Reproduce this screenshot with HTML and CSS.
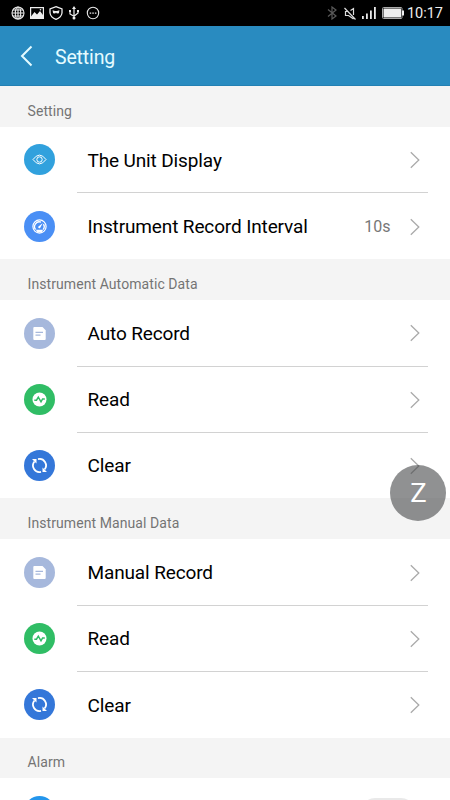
FILE: index.html
```html
<!DOCTYPE html>
<html lang="en">
<head>
<meta charset="utf-8">
<title>Setting</title>
<link rel="stylesheet" href="styles.css">
</head>
<body>
<svg class="defs" aria-hidden="true">
  <symbol id="next" viewBox="0 0 10 18"><path d="M.8 1.2 8.8 9l-8 7.8" fill="none" stroke="currentColor" stroke-width="1.3"/></symbol>
  <symbol id="eye" viewBox="0 0 31 31"><g fill="none" stroke="#fff"><path d="M9 15.5Q15.5 6.7 22 15.5 15.5 24.3 9 15.5Z"/><circle cx="15.5" cy="15.5" r="2.7"/></g></symbol>
  <symbol id="gauge" viewBox="0 0 31 31"><circle cx="15.5" cy="15.5" r="6.6" fill="none" stroke="#fff" stroke-width="1.2"/><path d="M11.6 18.5a4.7 4.7 0 0 1 5.4-7.3M19.5 13.2a4.7 4.7 0 0 1-.2 5.3" fill="none" stroke="#fff" stroke-width="1.3"/><path d="m14.2 15.7 4.6-3.6-2.7 5a1.3 1.3 0 0 1-1.9-1.4ZM11.8 18.7h7.4l-1.700 2.800h-4Z" fill="#fff"/></symbol>
  <symbol id="doc" viewBox="0 0 31 31"><path d="M10.300 9h8.200l3.200 3.200v8.800q0 1-1 1H10.300q-1 0-1-1v-11q0-1 1-1Z" fill="#fff"/><path d="M11.500 14.300h7.500M11.500 17.200h5" stroke="#a6b8dc" stroke-width="1.200"/></symbol>
  <symbol id="pulse" viewBox="0 0 31 31"><circle cx="15.500" cy="15.500" r="7" fill="#fff"/><path d="M10.300 16.200h2.200l1.800-3 2.700 4.600 1.600-2.900h2.200" fill="none" stroke="#30bd65" stroke-width="1.500"/></symbol>
  <symbol id="sync" viewBox="0 0 31 31"><g fill="none" stroke="#fff" stroke-width="1.800"><path d="M14 9.200a6.400 6.400 0 0 1 6.500 10.300M17 21.800a6.400 6.400 0 0 1-6.500-10.300"/></g><path d="M18.500 17.500v4.500h4.500ZM12.500 13.500V9H8Z" fill="#fff"/></symbol>
</svg>
<div class="screen">
  <div class="status">
    <div class="group">
      <svg width="14" height="14" viewBox="0 0 14 14" fill="none" stroke="#e8e8e8" stroke-width="1.1"><circle cx="7" cy="7" r="6"/><ellipse cx="7" cy="7" rx="2.7" ry="6"/><path d="M7 1v12M1 7h12M2 4h10M2 10h10"/></svg>
      <svg width="14" height="12" viewBox="0 0 14 12"><path d="M.6.6h12.800v10.800H.6Z" fill="none" stroke="#eee" stroke-width="1.200"/><path d="M1 9.500 4.500 5 7 7.500 10 4l3 4v3.400H1Z" fill="#eee"/><circle cx="10.500" cy="2.700" r=".8" fill="#eee"/></svg>
      <svg width="14" height="14" viewBox="0 0 14 14"><path d="M7 .7 13 3v4q-.7 4.500-6 6.300Q1.700 11.500 1 7V3Z" fill="none" stroke="#eee" stroke-width="1.300"/><path d="m3.600 4.200 2.400.8h2l2.400-.8-.5 3-2 .3L7 6.500l-.9 1-2-.3Z" fill="#eee"/></svg>
      <svg width="12" height="14" viewBox="0 0 12 14"><path d="M6 2v9M2 5v3l4 2.300L10 7V5" fill="none" stroke="#eee" stroke-width="1.200"/><path d="m6 0 2 3H4ZM1 4h2v2H1ZM9 4h2v2H9Z" fill="#eee"/><circle cx="6" cy="12" r="1.500" fill="#eee"/></svg>
      <svg class="more" width="14" height="14" viewBox="0 0 14 14"><circle cx="7" cy="7" r="5.700" fill="none" stroke="#e8e8e8" stroke-width="1.100"/><path d="M3.700 6.500h1.500v1.300H3.700ZM6.300 6.500h1.500v1.300H6.300ZM8.900 6.500h1.500v1.300H8.900Z" fill="#eee"/></svg>
    </div>
    <div class="group right">
      <svg width="10" height="14" viewBox="0 0 10 14" fill="none" stroke="#5a5a5a" stroke-width="1.200"><path d="m1 3.500 8 6.500-4 3V1l4 3-8 6.500"/></svg>
      <svg width="12" height="13" viewBox="0 0 12 13" fill="none" stroke="#ddd" stroke-width="1.200"><path d="M4.500 4.500h-3v4h3l5 3.500M6.500 3.500l3-2V8M.5 1l11 11.500"/></svg>
      <svg width="14" height="12" viewBox="0 0 14 12" fill="#e8e8e8"><path d="M0 9h1.800v3H0ZM4 6.500h1.800V12H4ZM8 3.500h1.800V12H8ZM12 0h1.800v12H12Z"/></svg>
      <svg width="22" height="12" viewBox="0 0 22 12"><rect x=".5" y=".5" width="19.500" height="11" rx="1" fill="none" stroke="#aaa"/><path d="M1.500 1.500h17.500v9H1.500ZM20 3.500h2v5h-2Z" fill="#eee"/></svg>
      <span class="clock">10:17</span>
    </div>
  </div>
  <header class="bar">
    <svg width="13" height="22" viewBox="0 0 13 22"><path d="M11.500 1.500 2 11l9.500 9.500" fill="none" stroke="#e4fbff" stroke-width="2"/></svg>
    <h1>Setting</h1>
  </header>
  <main>
    <h2>Setting</h2>
    <section>
      <div class="row"><i class="dot eye"><svg><use href="#eye"/></svg></i><div class="body"><b>The Unit Display</b><svg class="next"><use href="#next"/></svg></div></div>
      <div class="row"><i class="dot gauge"><svg><use href="#gauge"/></svg></i><div class="body"><b>Instrument Record Interval</b><span class="value">10s</span><svg class="next"><use href="#next"/></svg></div></div>
    </section>
    <h2>Instrument Automatic Data</h2>
    <section>
      <div class="row"><i class="dot doc"><svg><use href="#doc"/></svg></i><div class="body"><b>Auto Record</b><svg class="next"><use href="#next"/></svg></div></div>
      <div class="row"><i class="dot pulse"><svg><use href="#pulse"/></svg></i><div class="body"><b>Read</b><svg class="next"><use href="#next"/></svg></div></div>
      <div class="row"><i class="dot sync"><svg><use href="#sync"/></svg></i><div class="body"><b>Clear</b><svg class="next"><use href="#next"/></svg></div></div>
    </section>
    <h2>Instrument Manual Data</h2>
    <section>
      <div class="row"><i class="dot doc"><svg><use href="#doc"/></svg></i><div class="body"><b>Manual Record</b><svg class="next"><use href="#next"/></svg></div></div>
      <div class="row"><i class="dot pulse"><svg><use href="#pulse"/></svg></i><div class="body"><b>Read</b><svg class="next"><use href="#next"/></svg></div></div>
      <div class="row"><i class="dot sync"><svg><use href="#sync"/></svg></i><div class="body"><b>Clear</b><svg class="next"><use href="#next"/></svg></div></div>
    </section>
    <h2>Alarm</h2>
    <section>
      <div class="row"><i class="dot alarm"></i><div class="body"><span class="switch"></span></div></div>
    </section>
  </main>
  <div class="float"><span>Z</span></div>
</div>
</body>
</html>
```
FILE: styles.css
```css
* { box-sizing: border-box; }
body { margin: 0; font-family: Roboto, "Liberation Sans", sans-serif; }
.defs { display: none; }
.screen { position: relative; width: 450px; height: 800px; overflow: hidden; background: #fff; }
.status { display: flex; align-items: center; justify-content: space-between; height: 26px; padding: 0 7px 0 11px; background: #000; }
.group { display: flex; align-items: center; gap: 5px; }
.more { margin-left: 1px; }
.right { gap: 6px; }
.right svg:first-child { margin-right: 1px; }
.clock { color: #eee; font-size: 14.5px; line-height: 26px; margin: 1px 0 0 -3px; }
.bar { display: flex; align-items: center; height: 60px; padding-left: 20px; background: #298bc0; border-bottom: 1px solid #2380b3; }
.bar h1 { margin: 3px 0 0 22px; font-size: 19.5px; font-weight: 400; letter-spacing: -.15px; color: #e4fbff; }
h2 { display: flex; align-items: center; height: 40.7px; margin: 0; padding: 8.4px 0 0 27.5px; background: #f4f4f4; color: #747474; font-size: 14px; letter-spacing: .08px; font-weight: 400; }
.row { display: flex; align-items: center; height: 66.2px; padding: 0 22px 0 24px; }
.dot { flex: none; width: 31px; height: 31px; margin-top: .4px; border-radius: 50%; }
.dot svg { display: block; width: 31px; height: 31px; }
.eye { background: #31a1dd; }
.gauge { background: #4a8ff5; }
.doc { background: #a6b8dc; }
.pulse { background: #30bd65; }
.sync { background: #3477d9; }
.alarm { background: #2496ec; }
.body { position: relative; top: .6px; display: flex; flex: 1; align-items: center; height: 100%; margin-left: 22px; padding: 1px 8px 0 10.5px; border-bottom: 1px solid #d2d2d2; }
.row:last-child .body { border-bottom-color: transparent; }
.body b { flex: 1; font-size: 19px; font-weight: 400; letter-spacing: -.13px; color: #000; }
.value { margin-right: 19px; font-size: 16px; color: #777; }
.next { width: 10px; height: 18px; margin-right: .5px; color: #aaa; }
.switch { width: 54px; height: 28px; margin-right: 5px; margin-left: auto; border: 2px solid #e9e9e9; border-radius: 14px; }
.float { position: absolute; left: 390px; top: 465px; display: flex; align-items: center; justify-content: center; width: 56px; height: 56px; border-radius: 50%; background: rgba(70, 72, 73, .6); color: #fff; font-size: 25px; }
.float span { transform: scaleX(1.1); }
```
